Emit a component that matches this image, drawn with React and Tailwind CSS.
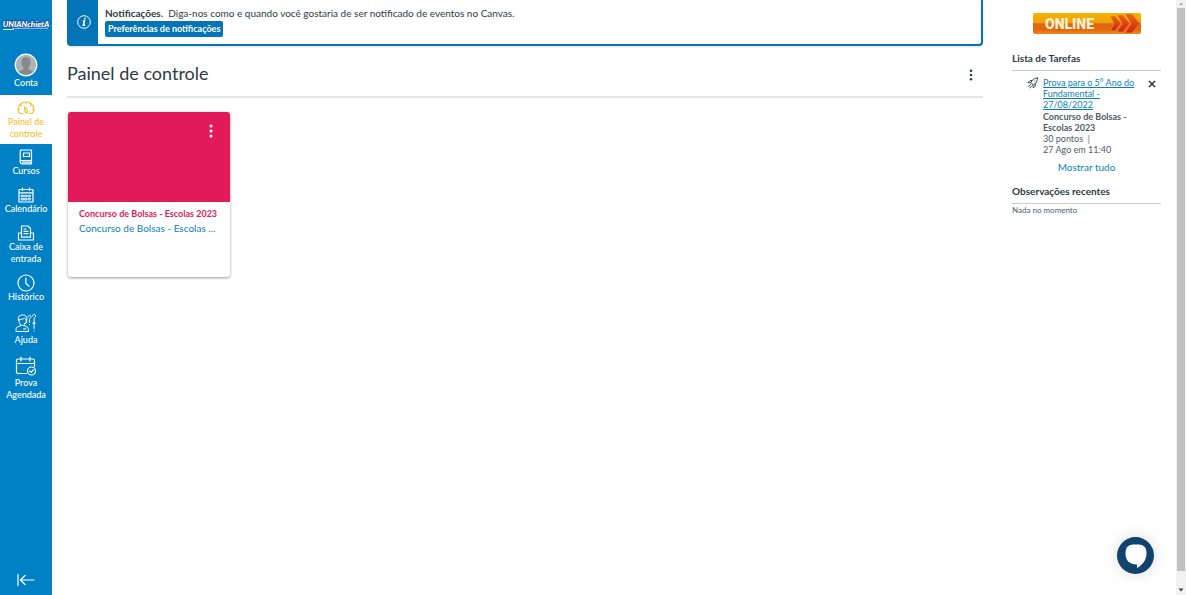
import React from "react";

const stroke = {
  fill: "none",
  stroke: "currentColor",
  strokeWidth: 1.2,
  strokeLinecap: "round",
  strokeLinejoin: "round",
};

function Logo() {
  return (
    <svg viewBox="0 0 50 14" className="h-3.5 w-[50px]" role="img" aria-label="UniAnchieta">
      <path d="M2 11.500h10l1-1.500h34" fill="none" stroke="#dceaf7" strokeWidth="1.200" />
      <text x="25" y="9" textAnchor="middle" fontFamily="Lato, sans-serif" fontSize="8" fontWeight="900" fontStyle="italic" fill="#fff" stroke="#1c4f8f" strokeWidth="1.400" paintOrder="stroke">
        UNIANchietA
      </text>
    </svg>
  );
}

function Avatar() {
  return (
    <svg viewBox="0 0 24 24" className="size-6">
      <clipPath id="face"><circle cx="12" cy="12" r="10" /></clipPath>
      <circle cx="12" cy="12" r="10.8" fill="#b0b3b5" stroke="#fff" strokeWidth="1.2" />
      <g clipPath="url(#face)" fill="#85888a">
        <ellipse cx="12" cy="9.5" rx="4.6" ry="5.6" />
        <path d="M9.500 13h5v3c1 1.500 6 1.500 6.500 6H3c.5-4.500 5.500-4.500 6.500-6z" />
      </g>
    </svg>
  );
}

function GaugeIcon() {
  return (
    <svg viewBox="0 0 18 14" className="h-3.5 w-[18px]" {...stroke}>
      <path d="M6 12.500H3C1.700 11.500 1 10 1 8.500a8 7.500 0 0 1 16 0c0 1.500-.7 3-2 4h-3" />
      <path d="M7.500 6l.7 4.800a1.300 1.300 0 1 0 2.100-1.300zM9 1.500v1.200M4 4l.7.7M14 4l-.7.7M1.500 8.500h1M15.500 8.500h1" />
    </svg>
  );
}

function BookIcon() {
  return (
    <svg viewBox="0 0 16 16" className="size-4" {...stroke}>
      <path d="M4 1h9.500v10.500H4A2 2 0 0 0 2.200 13V2.500A1.500 1.500 0 0 1 4 1zM2.200 13A1.800 1.800 0 0 0 4 14.800h9.500M4.500 13.200h8.500M13.500 11.500v3.300M5.500 4h6v3.500h-6z" />
    </svg>
  );
}

function CalendarIcon() {
  return (
    <svg viewBox="0 0 16 16" className="size-4" {...stroke}>
      <path d="M1 2.500h14V15H1zM1 5.800h14M4.500 1v2.500M11.500 1v2.500" />
      <path d="M3.500 8.300h2v1.500h-2zM7 8.300h2v1.500H7zM10.500 8.300h2v1.500h-2zM3.500 11.500h2V13h-2zM7 11.500h2V13H7zM10.500 11.500h2V13h-2z" strokeWidth="0.9" />
    </svg>
  );
}

function InboxIcon() {
  return (
    <svg viewBox="0 0 18 16" className="h-4 w-[18px]" {...stroke}>
      <path d="M4.500 10V1H11l2.500 2.500V10M7 4h2M7 6.300h4M7 8.600h4" />
      <path d="M4.500 8h-3v7h15V8h-3M4.500 10.500v1.700h9v-1.700" />
    </svg>
  );
}

function ClockIcon() {
  return (
    <svg viewBox="0 0 18 18" className="size-[18px]" {...stroke}>
      <circle cx="9" cy="9" r="8" />
      <path d="M8.800 4v5l3.200 3.400" />
    </svg>
  );
}

function HelpIcon() {
  return (
    <svg viewBox="0 0 22 20" className="h-5 w-[22px]" {...stroke} strokeWidth="1">
      <path d="M3.500 7.500C2.500 3.500 4.500 2 7.500 2s5 1.500 4.200 5.500M3.500 6.500c3 0 5-.5 6-1.500.5 1 1.200 1.500 2.200 1.500M4 7.500c0 3 1.500 5 3.600 5s3.700-2 3.700-5M11.800 8.500c0 1.500-1 2-2.500 2" />
      <path d="M6 12.500L2.500 14C1 14.500 1 16 1 18.500h12.500c0-2.500 0-4-1.500-4.500l-3-1.500M8.500 16H11" />
      <path d="M13 4c0-2 3-2 3 0 0 1.200-1.500 1.200-1.500 2.500v3M17.500 3c0-2.200 3.200-2.200 3.200 0 0 1.300-1.600 1.500-1.600 3v9.500M14.500 11.500v.2M17.700 10.500c0-1.300 2.800-1.300 2.800 0M19.100 17.800v.2" />
    </svg>
  );
}

function ScheduledIcon() {
  return (
    <svg viewBox="0 0 22 20" className="h-5 w-[22px]" {...stroke}>
      <path d="M11.500 17.500H3A1.500 1.500 0 0 1 1.500 16V4.500A1.500 1.500 0 0 1 3 3h15a1.500 1.500 0 0 1 1.500 1.500v6M1.500 7.500h18M6 1v4M15 1v4" />
      <circle cx="16.500" cy="15" r="4" />
      <path d="M14.800 15l1.300 1.300 2.300-2.500" />
    </svg>
  );
}

function RocketIcon() {
  return (
    <svg viewBox="0 0 12 12" className="size-3" {...stroke} strokeWidth="0.900">
      <path d="M10.500 1C7.500 1 5.500 2.500 3.800 5.500L6.300 8c3-1.700 4.200-4 4.200-7zM5 3.500H3L1 5.500l2.800.3M8.300 6.800v2.200l-2 2L6 8.200M3.500 7.300L1.500 9.500M4.800 8.800L2.800 11M7.800 4h.2" />
    </svg>
  );
}

function OnlineBanner() {
  return (
    <svg viewBox="0 0 108 21" className="h-[21px] w-[108px]" role="img" aria-label="Online">
      <defs>
        <linearGradient id="gold" x1="0" y1="0" x2="0" y2="1">
          <stop offset="0" stopColor="#f5b500" />
          <stop offset="0.45" stopColor="#f0a00c" />
          <stop offset="0.52" stopColor="#dd6810" />
          <stop offset="0.8" stopColor="#e2670d" />
          <stop offset="1" stopColor="#f08a16" />
        </linearGradient>
        <linearGradient id="red" x1="0" y1="0" x2="0" y2="1">
          <stop offset="0" stopColor="#e8660f" />
          <stop offset="1" stopColor="#cf2418" />
        </linearGradient>
      </defs>
      <rect width="108" height="21" rx="2" fill="url(#gold)" />
      <text x="12" y="15.500" fontFamily="Roboto, sans-serif" fontSize="14" fontWeight="900" fill="#fff1d6">ONLINE</text>
      <g fill="url(#red)" stroke="#ef9a2c" strokeWidth="0.6">
        <path d="M77 3h5l6 7.500-6 7.500h-5l4-7.500z" />
        <path d="M84 2h6l7 8.500-7 8.500h-6l5-8.500z" />
        <path d="M92 1h7l8 9.500-8 9.500h-7l6-9.500z" />
      </g>
    </svg>
  );
}

function Dots({ className }) {
  return (
    <svg viewBox="0 0 4 14" className={className} fill="currentColor">
      <circle cx="2" cy="2" r="1.500" />
      <circle cx="2" cy="7" r="1.500" />
      <circle cx="2" cy="12" r="1.500" />
    </svg>
  );
}

function NavItem({ label, icon, active, tall }) {
  return (
    <a
      href="#"
      aria-current={active ? "page" : undefined}
      className={
        "flex flex-col items-center pt-1 text-center text-[9px] leading-3 font-medium " +
        (active ? "bg-white pb-1 text-[#f5c02c]" : "pb-[5px] text-white")
      }
    >
      <span className={"flex items-center justify-center " + (tall ? "h-[22px]" : "h-[17px]")}>{icon}</span>
      <span className="w-11">{label}</span>
    </a>
  );
}

function Sidebar() {
  return (
    <nav aria-label="Navegação global" className="flex w-[52px] shrink-0 flex-col bg-[#0081c6]">
      <a href="#" className="flex h-[49px] items-center justify-center"><Logo /></a>
      <a href="#" className="flex flex-col items-center pt-1 pb-1.5 text-[9px] leading-3 font-medium text-white">
        <Avatar />
        <span>Conta</span>
      </a>
      <NavItem label="Painel de controle" icon={<GaugeIcon />} active />
      <NavItem label="Cursos" icon={<BookIcon />} />
      <NavItem label="Calendário" icon={<CalendarIcon />} />
      <NavItem label="Caixa de entrada" icon={<InboxIcon />} />
      <NavItem label="Histórico" icon={<ClockIcon />} />
      <NavItem label="Ajuda" icon={<HelpIcon />} tall />
      <NavItem label="Prova Agendada" icon={<ScheduledIcon />} tall />
      <button aria-label="Minimizar navegação" className="mt-auto flex h-[30px] items-center justify-center text-white">
        <svg viewBox="0 0 18 12" className="h-3 w-[18px]" {...stroke}>
          <path d="M1 .5v11M17 6H4M8 1.500L3.500 6 8 10.500" />
        </svg>
      </button>
    </nav>
  );
}

function Notice() {
  return (
    <section className="flex h-[46px] rounded-b-sm border-2 border-t-0 border-[#0374b5] bg-white shadow-sm">
      <div className="flex w-[29px] shrink-0 items-center justify-center bg-[#0374b5] text-white">
        <svg viewBox="0 0 14 14" className="size-3.5">
          <circle cx="7" cy="7" r="6.300" fill="none" stroke="currentColor" />
          <path d="M7.900 2.800v1.600M5.800 6h1.700l-.9 4M5.500 10.200h2.600" fill="none" stroke="currentColor" strokeWidth="1.500" />
        </svg>
      </div>
      <div className="pt-[5px] pl-[7px]">
        <p className="text-[10px] leading-4">
          <strong>Notificações.</strong>&nbsp; Diga-nos como e quando você gostaria de ser notificado de eventos no Canvas.
        </p>
        <button className="flex h-4 items-center rounded-xs bg-[#0374b5] px-[3px] text-[9px] leading-3 font-bold text-white">
          Preferências de notificações
        </button>
      </div>
    </section>
  );
}

function CourseCard() {
  return (
    <article className="h-[165px] w-[162px] overflow-hidden rounded-[3px] bg-white shadow-[0_1px_3px_rgba(0,0,0,0.4)]">
      <div className="flex h-[90px] items-start justify-end bg-[#e2195b] pt-3 pr-[17px]">
        <button aria-label="Opções do curso" className="text-white"><Dots className="h-3.5 w-1" /></button>
      </div>
      <div className="pt-1 pl-[11px] whitespace-nowrap">
        <h2 className="text-[9px] leading-4 font-bold text-[#e2195b]">Concurso de Bolsas - Escolas 2023</h2>
        <a href="#" className="block text-[10px] leading-3 text-[#0a7fc0]">Concurso de Bolsas - Escolas ...</a>
      </div>
    </article>
  );
}

function RightRail() {
  return (
    <aside className="w-[149px] shrink-0 pt-[13px]">
      <div className="flex justify-center"><OnlineBanner /></div>
      <h2 className="mt-4 border-b border-[#c7cdd1] pb-1 text-[10px] leading-4 font-bold">Lista de Tarefas</h2>
      <div className="flex items-start pt-1.5 pl-[15px]">
        <RocketIcon />
        <div className="ml-1 min-w-0 flex-1 text-[9px] leading-[11px] text-[#4d5c68]">
          <a href="#" className="block text-[#0a7fc0] underline">Prova para o 5° Ano do Fundamental - 27/08/2022</a>
          <p className="mt-px font-bold">Concurso de Bolsas - Escolas 2023</p>
          <p>30 pontos &nbsp;|</p>
          <p>27 Ago em 11:40</p>
        </div>
        <button aria-label="Ignorar" className="mt-[3px] mr-[5px] ml-[11px]">
          <svg viewBox="0 0 8 8" className="size-2"><path d="M1 1l6 6M7 1L1 7" stroke="currentColor" strokeWidth="1.600" /></svg>
        </button>
      </div>
      <a href="#" className="mt-1 block text-center text-[10px] leading-4 text-[#0a7fc0]">Mostrar tudo</a>
      <h2 className="mt-2 border-b border-[#c7cdd1] pb-1 text-[10px] leading-4 font-bold">Observações recentes</h2>
      <p className="text-[8px] leading-3 text-[#4d5c68]">Nada no momento</p>
    </aside>
  );
}

function ScrollTrack() {
  return (
    <div aria-hidden="true" className="flex w-2.5 shrink-0 flex-col items-center bg-[#f1f1f1]">
      <svg viewBox="0 0 10 8" className="h-2 w-2.5"><path d="M3 5l2-2 2 2z" fill="#9a9a9a" /></svg>
      <div className="w-2 flex-1 bg-[#c1c1c1]" />
      <svg viewBox="0 0 10 24" className="h-6 w-2.5"><path d="M2.500 17.500h5L5 20.500z" fill="#444" /></svg>
    </div>
  );
}

export default function App() {
  return (
    <div className="flex min-h-screen bg-white font-['Lato',sans-serif] text-[#2d3b45]">
      <Sidebar />
      <div className="flex min-w-0 flex-1 gap-[29px] px-[15px]">
        <main className="min-w-0 flex-1">
          <Notice />
          <header className="flex h-[52px] items-center justify-between border-b-2 border-[#e3e6e8] pt-2 pr-2.5">
            <h1 className="-mt-1 text-lg leading-6">Painel de controle</h1>
            <button aria-label="Opções do painel"><Dots className="h-3 w-1" /></button>
          </header>
          <div className="pt-3.5 pl-px"><CourseCard /></div>
        </main>
        <RightRail />
      </div>
      <ScrollTrack />
      <button aria-label="Abrir bate-papo" className="fixed right-8 bottom-[21px] flex size-[37px] items-center justify-center rounded-full bg-[#12436f] shadow-[0_0_16px_rgba(0,0,0,0.15)]">
        <svg viewBox="0 0 24 26" className="h-[26px] w-6">
          <path d="M12 1.500c7 0 10.500 1.500 10.500 8.500 0 6-2.500 11-9.500 15v-3.500C5.500 21.500 1.500 17.500 1.500 10.500 1.500 3 5 1.500 12 1.500z" fill="#fff" />
        </svg>
      </button>
    </div>
  );
}
